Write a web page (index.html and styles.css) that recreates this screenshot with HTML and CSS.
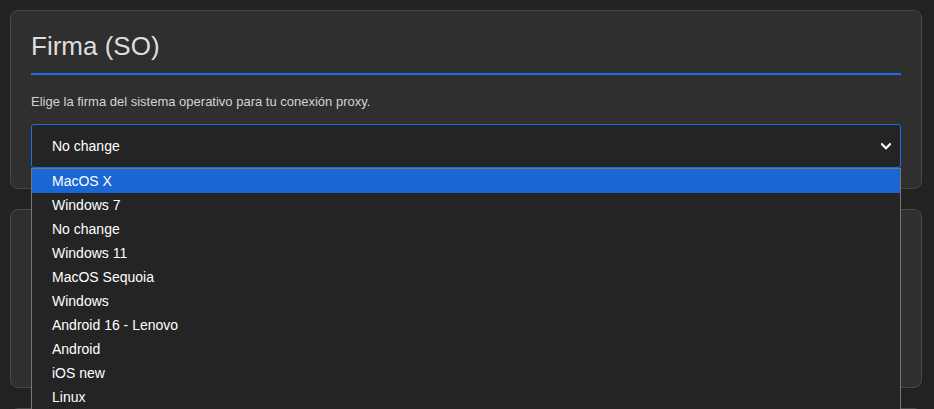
FILE: index.html
```html
<!DOCTYPE html>
<html lang="es">
<head>
<meta charset="utf-8">
<title>Firma (SO)</title>
<link rel="stylesheet" href="styles.css">
</head>
<body>
<main class="page">
  <section class="card">
    <h2 class="card-title">Firma (SO)</h2>
    <p class="card-desc">Elige la firma del sistema operativo para tu conexión proxy.</p>
    <div class="select-wrap">
      <div class="select">
        <span class="select-value">No change</span>
        <svg class="chevron" width="10" height="7" viewBox="0 0 10 7" aria-hidden="true">
          <path d="M1 1.2 L5 5.2 L9 1.2" fill="none" stroke="#ffffff" stroke-width="2.2" stroke-linecap="square"/>
        </svg>
      </div>
      <ul class="dropdown">
        <li class="option active">MacOS X</li>
        <li class="option">Windows 7</li>
        <li class="option">No change</li>
        <li class="option">Windows 11</li>
        <li class="option">MacOS Sequoia</li>
        <li class="option">Windows</li>
        <li class="option">Android 16 - Lenovo</li>
        <li class="option">Android</li>
        <li class="option">iOS new</li>
        <li class="option">Linux</li>
      </ul>
    </div>
  </section>
  <section class="card card-empty"></section>
  <section class="card card-empty"></section>
</main>
</body>
</html>
```
FILE: styles.css
```css
html {
  overflow: hidden;
}
body {
  margin: 0;
  background: #222222;
  font-family: "Liberation Sans", Arial, sans-serif;
  color: #ffffff;
}
.page {
  padding: 10px 12px 0 10px;
  display: flex;
  flex-direction: column;
  gap: 20px;
}
.card {
  box-sizing: border-box;
  height: 179px;
  background: #2f2f2f;
  border: 1px solid #474747;
  border-radius: 8px;
  padding: 20px;
}
.card-title {
  margin: 0;
  font-size: 26px;
  font-weight: normal;
  line-height: 30px;
  color: #dedede;
  padding-bottom: 12px;
  border-bottom: 2px solid #1d6cf0;
}
.card-desc {
  margin: 19px 0 0;
  font-size: 13px;
  line-height: 15px;
  color: #d4d4d4;
}
.select-wrap {
  position: relative;
  margin-top: 15px;
}
.select {
  box-sizing: border-box;
  height: 44px;
  border: 1px solid #1d6cf0;
  border-radius: 3px;
  background: #242424;
  display: flex;
  align-items: center;
  justify-content: space-between;
  padding: 0 9px 0 20px;
  font-size: 14px;
  line-height: 16px;
}
.chevron {
  display: block;
}
.dropdown {
  position: absolute;
  left: 0;
  right: 0;
  top: 44px;
  margin: 0;
  padding: 0;
  list-style: none;
  background: #242424;
  border: 1px solid #777777;
  z-index: 10;
}
.option {
  height: 24px;
  line-height: 24px;
  padding-left: 20px;
  font-size: 14px;
  color: #ffffff;
}
.option.active {
  background: #1a67d3;
}
```
